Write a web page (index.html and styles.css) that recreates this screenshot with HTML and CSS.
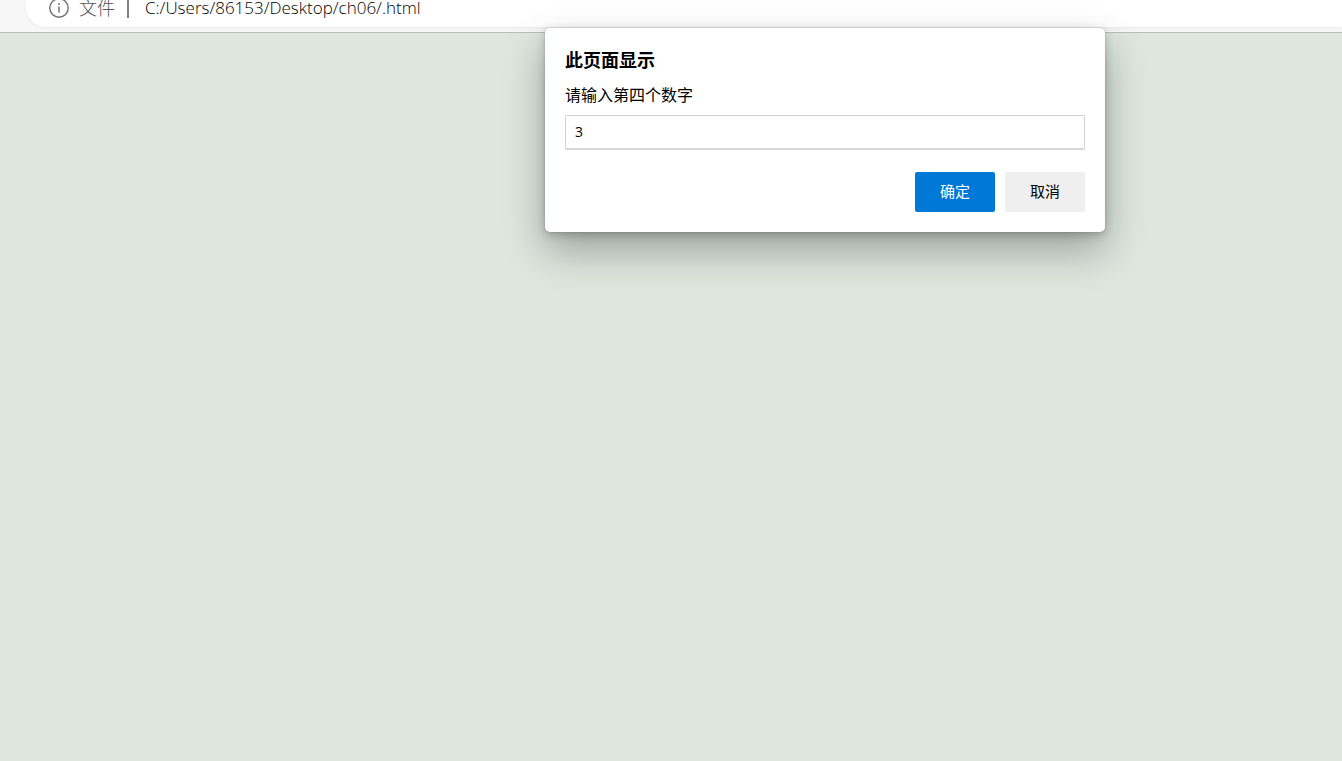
FILE: index.html
```html
<!DOCTYPE html>
<html lang="zh-CN">
<head>
    <meta charset="UTF-8">
    <meta name="viewport" content="width=device-width, initial-scale=1.0">
    <title>.html</title>
    <link rel="stylesheet" href="styles.css">
</head>
<body>
    <header class="toolbar">
        <div class="address-bar">
            <svg class="info-icon" width="20" height="20" viewBox="0 0 20 20" aria-hidden="true">
                <circle cx="10" cy="10" r="9.2" fill="none" stroke="#707070" stroke-width="1.4"/>
                <path d="M10 8.5v6" stroke="#707070" stroke-width="1.5"/>
                <circle cx="10" cy="6" r="1" fill="#707070"/>
            </svg>
            <span class="scheme">文件</span>
            <span class="divider"></span>
            <span class="url">C:/Users/86153/Desktop/ch06/.html</span>
        </div>
    </header>
    <main class="page"></main>

    <form class="dialog" role="dialog" aria-labelledby="dialogTitle">
        <h1 id="dialogTitle">此页面显示</h1>
        <label for="numberInput">请输入第四个数字</label>
        <input type="text" id="numberInput" value="3">
        <div class="actions">
            <button type="button" class="ok-btn">确定</button>
            <button type="button" class="cancel-btn">取消</button>
        </div>
    </form>
</body>
</html>
```
FILE: styles.css
```css
/* General Styles */
* {
    box-sizing: border-box;
}

body {
    font-family: "Open Sans", "Noto Sans CJK SC", sans-serif;
    display: flex;
    flex-direction: column;
    min-height: 100vh;
    margin: 0;
    background: #dde7de;
    color: #000;
}

/* Toolbar */
.toolbar {
    background: #f7f7f7;
    border-bottom: 1px solid #bbbdbb;
    padding: 0 0 5px 26px;
}

.address-bar {
    display: flex;
    align-items: center;
    height: 27px;
    padding: 0 0 11px 23px;
    background: #fff;
    border-radius: 0 0 0 20px;
    box-shadow: 0 1px 3px rgba(0, 0, 0, 0.06);
    line-height: 16px;
    white-space: nowrap;
}

.info-icon {
    flex: none;
}

.scheme {
    margin-left: 10px;
    font-size: 18px;
    font-weight: 300;
    color: #555;
}

.divider {
    width: 2px;
    height: 20px;
    margin: 0 16px 0 12px;
    background: #808080;
}

.url {
    font-size: 17px;
    font-weight: 350;
}

.page {
    flex: 1;
}

/* Prompt dialog, lies over the toolbar and the page */
.dialog {
    position: absolute;
    top: 28px;
    left: 545px;
    width: 560px;
    padding: 20px;
    background: #fff;
    border-radius: 5px;
    box-shadow: 0 0 2px rgba(0, 0, 0, 0.2), 0 3px 10px rgba(0, 0, 0, 0.2), 0 18px 40px rgba(0, 0, 0, 0.3);
}

h1 {
    margin: 0 0 11px;
    font-size: 18px;
    line-height: 24px;
}

label {
    display: block;
    margin-bottom: 8px;
    font-size: 16px;
    line-height: 24px;
}

input[type="text"] {
    display: block;
    width: 100%;
    height: 35px;
    padding: 0 9px 2px;
    border: 1px solid #d0d0d0;
    border-bottom: 2px solid #d6d6d6;
    border-radius: 2px;
    font-family: inherit;
    font-size: 14px;
    outline: none;
}

/* Buttons */
.actions {
    display: flex;
    justify-content: flex-end;
    gap: 10px;
    margin-top: 22px;
}

button {
    width: 80px;
    height: 40px;
    padding: 0 0 4px;
    border: none;
    border-radius: 2px;
    font-family: inherit;
    font-size: 15px;
    cursor: pointer;
}

.ok-btn {
    background: #0078d7;
    color: #fff;
}

.cancel-btn {
    background: #efefef;
    color: #000;
}
```
